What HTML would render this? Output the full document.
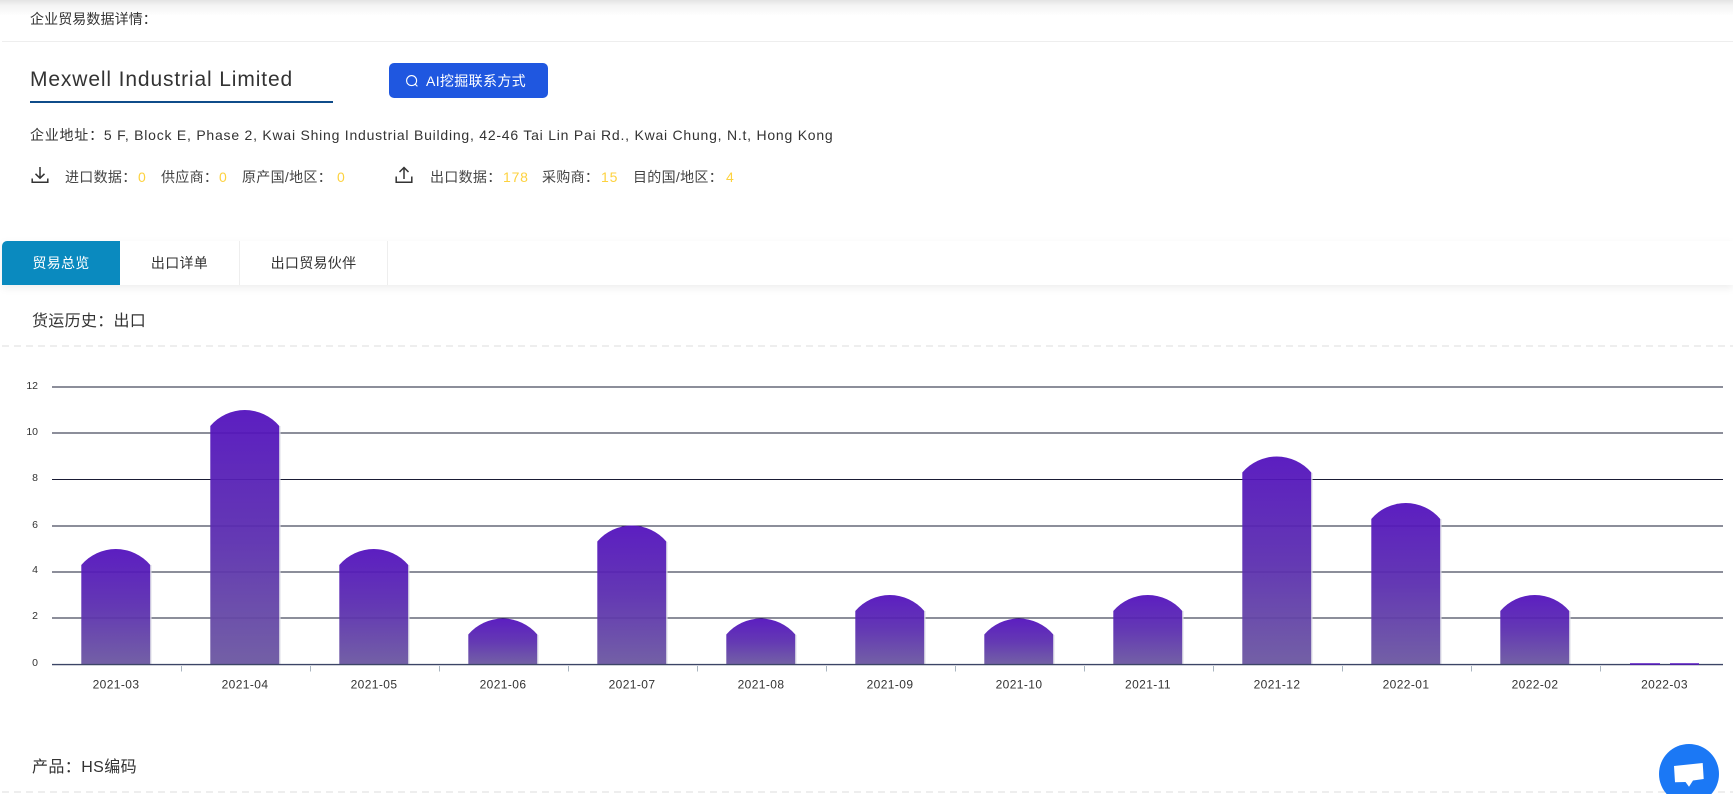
<!DOCTYPE html>
<html lang="zh"><head><meta charset="utf-8"><title>企业贸易数据详情</title>
<style>
html,body{margin:0;padding:0;background:#fff}
body{width:1733px;height:794px;overflow:hidden;position:relative;font-family:"Liberation Sans","Noto Sans CJK SC",sans-serif;color:#333}
.t{position:absolute;white-space:nowrap;line-height:20px}
.s{font-size:14px;letter-spacing:.3px;color:#444}
.v{font-size:14px;color:#fdd23f}
.tab{position:absolute;top:241px;height:44px;line-height:44px;text-align:center;font-size:14px;letter-spacing:.3px;background:#fff;box-sizing:border-box}
.dash{position:absolute;left:2px;right:0;height:2px;background:repeating-linear-gradient(90deg,#eee 0 7px,transparent 7px 12px)}
svg{position:absolute}
</style></head><body>
<div style="position:absolute;left:0;top:0;width:1733px;height:16px;background:linear-gradient(#e4e4e4,#f4f4f4 35%,#fff)"></div>
<div class="t" style="left:30px;top:9px;font-size:14px;letter-spacing:.1px">企业贸易数据详情：</div>
<div style="position:absolute;left:2px;right:0;top:41px;height:1px;background:#eee"></div>
<div class="t" style="left:30px;top:68px;font-size:21px;line-height:24px;letter-spacing:.87px">Mexwell Industrial Limited</div>
<div style="position:absolute;left:30px;top:101px;width:303px;height:2px;background:#0f4c8a"></div>
<div style="position:absolute;left:389px;top:63px;width:159px;height:35px;background:#1f57e0;border-radius:5px"></div>
<svg style="left:405px;top:74px" width="14" height="14" viewBox="0 0 14 14" fill="none" stroke="#fff" stroke-width="1.1"><circle cx="6.6" cy="6.6" r="5"/><path d="M10.2 10.2L12.4 12.4"/></svg>
<div class="t" style="left:426px;top:71px;font-size:14px;letter-spacing:.35px;color:#fff">AI挖掘联系方式</div>
<div class="t" style="left:30px;top:125px;font-size:14px;letter-spacing:.77px">企业地址：5 F, Block E, Phase 2, Kwai Shing Industrial Building, 42-46 Tai Lin Pai Rd., Kwai Chung, N.t, Hong Kong</div>

<svg style="left:31px;top:166px" width="18" height="18" viewBox="0 0 18 18" fill="none" stroke="#333" stroke-width="1.5"><path d="M9 1V12M4.5 7.8L9 12.2L13.5 7.8M1.2 12.5V16.3H16.8V12.5"/></svg>
<div class="t s" style="left:65px;top:167px">进口数据：</div><div class="t v" style="left:138px;top:167px">0</div>
<div class="t s" style="left:161px;top:167px">供应商：</div><div class="t v" style="left:219px;top:167px">0</div>
<div class="t s" style="left:242px;top:167px">原产国/地区：</div><div class="t v" style="left:337px;top:167px">0</div>
<svg style="left:395px;top:166px" width="18" height="18" viewBox="0 0 18 18" fill="none" stroke="#333" stroke-width="1.5"><path d="M9 13V1.5M4.5 6L9 1.5L13.5 6M1.2 10.5V16.3H16.8V10.5"/></svg>
<div class="t s" style="left:430px;top:167px">出口数据：</div><div class="t v" style="left:503px;top:167px;letter-spacing:.8px">178</div>
<div class="t s" style="left:542px;top:167px">采购商：</div><div class="t v" style="left:601px;top:167px;letter-spacing:.8px">15</div>
<div class="t s" style="left:633px;top:167px">目的国/地区：</div><div class="t v" style="left:726px;top:167px">4</div>

<div style="position:absolute;left:2px;right:0;top:241px;height:44px;box-shadow:0 3px 8px rgba(0,0,0,.07)"></div>
<div style="position:absolute;left:2px;right:0;top:241px;height:44px;background:#fff"></div>
<div class="tab" style="left:2px;width:118px;background:#0a8abf;color:#fff;border-top-left-radius:5px">贸易总览</div>
<div class="tab" style="left:120px;width:120px;border-right:1px solid #eee">出口详单</div>
<div class="tab" style="left:240px;width:148px;border-right:1px solid #eee">出口贸易伙伴</div>

<div class="t" style="left:32px;top:312px;font-size:16px;letter-spacing:.3px">货运历史：出口</div>
<div class="dash" style="top:345px"></div>

<svg style="left:0;top:370px" width="1733" height="330" viewBox="0 370 1733 330">
<defs><linearGradient id="g" x1="0" y1="0" x2="0" y2="1"><stop offset="0" stop-color="#5210bd"/><stop offset=".5" stop-color="#5a2caf"/><stop offset="1" stop-color="#6a56a0"/></linearGradient></defs>
<g stroke="#1a1c35" stroke-width="1">
<path d="M52 387H1723"/><path d="M52 433H1723"/><path d="M52 479.5H1723"/><path d="M52 526H1723"/><path d="M52 572H1723"/><path d="M52 618H1723"/>
</g>
<g fill="url(#g)" fill-opacity=".94">
<path d="M81.3 664V565A45.2 45.2 0 0 1 150.3 565V664Z"/>
<path d="M210.3 664V426A45.2 45.2 0 0 1 279.3 426V664Z"/>
<path d="M339.3 664V565A45.2 45.2 0 0 1 408.3 565V664Z"/>
<path d="M468.3 664V634.5A45.2 45.2 0 0 1 537.3 634.5V664Z"/>
<path d="M597.3 664V541.5A45.2 45.2 0 0 1 666.3 541.5V664Z"/>
<path d="M726.3 664V634.5A45.2 45.2 0 0 1 795.3 634.5V664Z"/>
<path d="M855.3 664V611A45.2 45.2 0 0 1 924.3 611V664Z"/>
<path d="M984.3 664V634.5A45.2 45.2 0 0 1 1053.3 634.5V664Z"/>
<path d="M1113.3 664V611A45.2 45.2 0 0 1 1182.3 611V664Z"/>
<path d="M1242.3 664V472.5A45.2 45.2 0 0 1 1311.3 472.5V664Z"/>
<path d="M1371.3 664V519A45.2 45.2 0 0 1 1440.3 519V664Z"/>
<path d="M1500.3 664V611A45.2 45.2 0 0 1 1569.3 611V664Z"/>
</g>
<g stroke="#dcdde6" stroke-width="1.2" fill="none">
<path d="M150.9 565V664M279.9 426V664M408.9 565V664M537.9 635V664M666.9 542V664M795.9 635V664M924.9 611V664M1053.9 635V664M1182.9 611V664M1311.9 473V664M1440.9 519V664M1569.9 611V664"/>
</g>
<path d="M52 664.6H1723" stroke="#3c4566" stroke-width="1.4"/>
<path d="M1630 664H1660M1670 664H1699" stroke="#5514bf" stroke-width="1.4"/>
<path d="M181.5 666V671.5M310.5 666V671.5M439.5 666V671.5M568.5 666V671.5M697.5 666V671.5M826.5 666V671.5M955.5 666V671.5M1084.5 666V671.5M1213.5 666V671.5M1342.5 666V671.5M1471.5 666V671.5M1600.5 666V671.5" stroke="#a9b5c0" stroke-width="1"/>
<g font-family="Liberation Sans" font-size="10.5" fill="#333" text-anchor="end">
<text x="38" y="389">12</text><text x="38" y="435">10</text><text x="38" y="481">8</text><text x="38" y="528">6</text><text x="38" y="573">4</text><text x="38" y="619">2</text><text x="38" y="666">0</text>
</g>
<g font-family="Liberation Sans" font-size="12" letter-spacing=".4" fill="#333" text-anchor="middle">
<text x="116" y="688.5">2021-03</text><text x="245" y="688.5">2021-04</text><text x="374" y="688.5">2021-05</text><text x="503" y="688.5">2021-06</text><text x="632" y="688.5">2021-07</text><text x="761" y="688.5">2021-08</text><text x="890" y="688.5">2021-09</text><text x="1019" y="688.5">2021-10</text><text x="1148" y="688.5">2021-11</text><text x="1277" y="688.5">2021-12</text><text x="1406" y="688.5">2022-01</text><text x="1535" y="688.5">2022-02</text><text x="1664.5" y="688.5">2022-03</text>
</g>
</svg>

<div class="t" style="left:32px;top:760px;font-size:16px;line-height:16px;letter-spacing:.4px">产品：HS编码</div>
<div class="dash" style="top:791px"></div>

<svg style="left:1659px;top:744px" width="60" height="50" viewBox="0 0 60 50">
<circle cx="30" cy="30" r="30" fill="#1b78f5"/>
<path d="M15 22L43.7 19L44.7 35L34 36.5L30 42.7L26.5 38L16 38.3Z" fill="#fff"/>
</svg>
</body></html>
